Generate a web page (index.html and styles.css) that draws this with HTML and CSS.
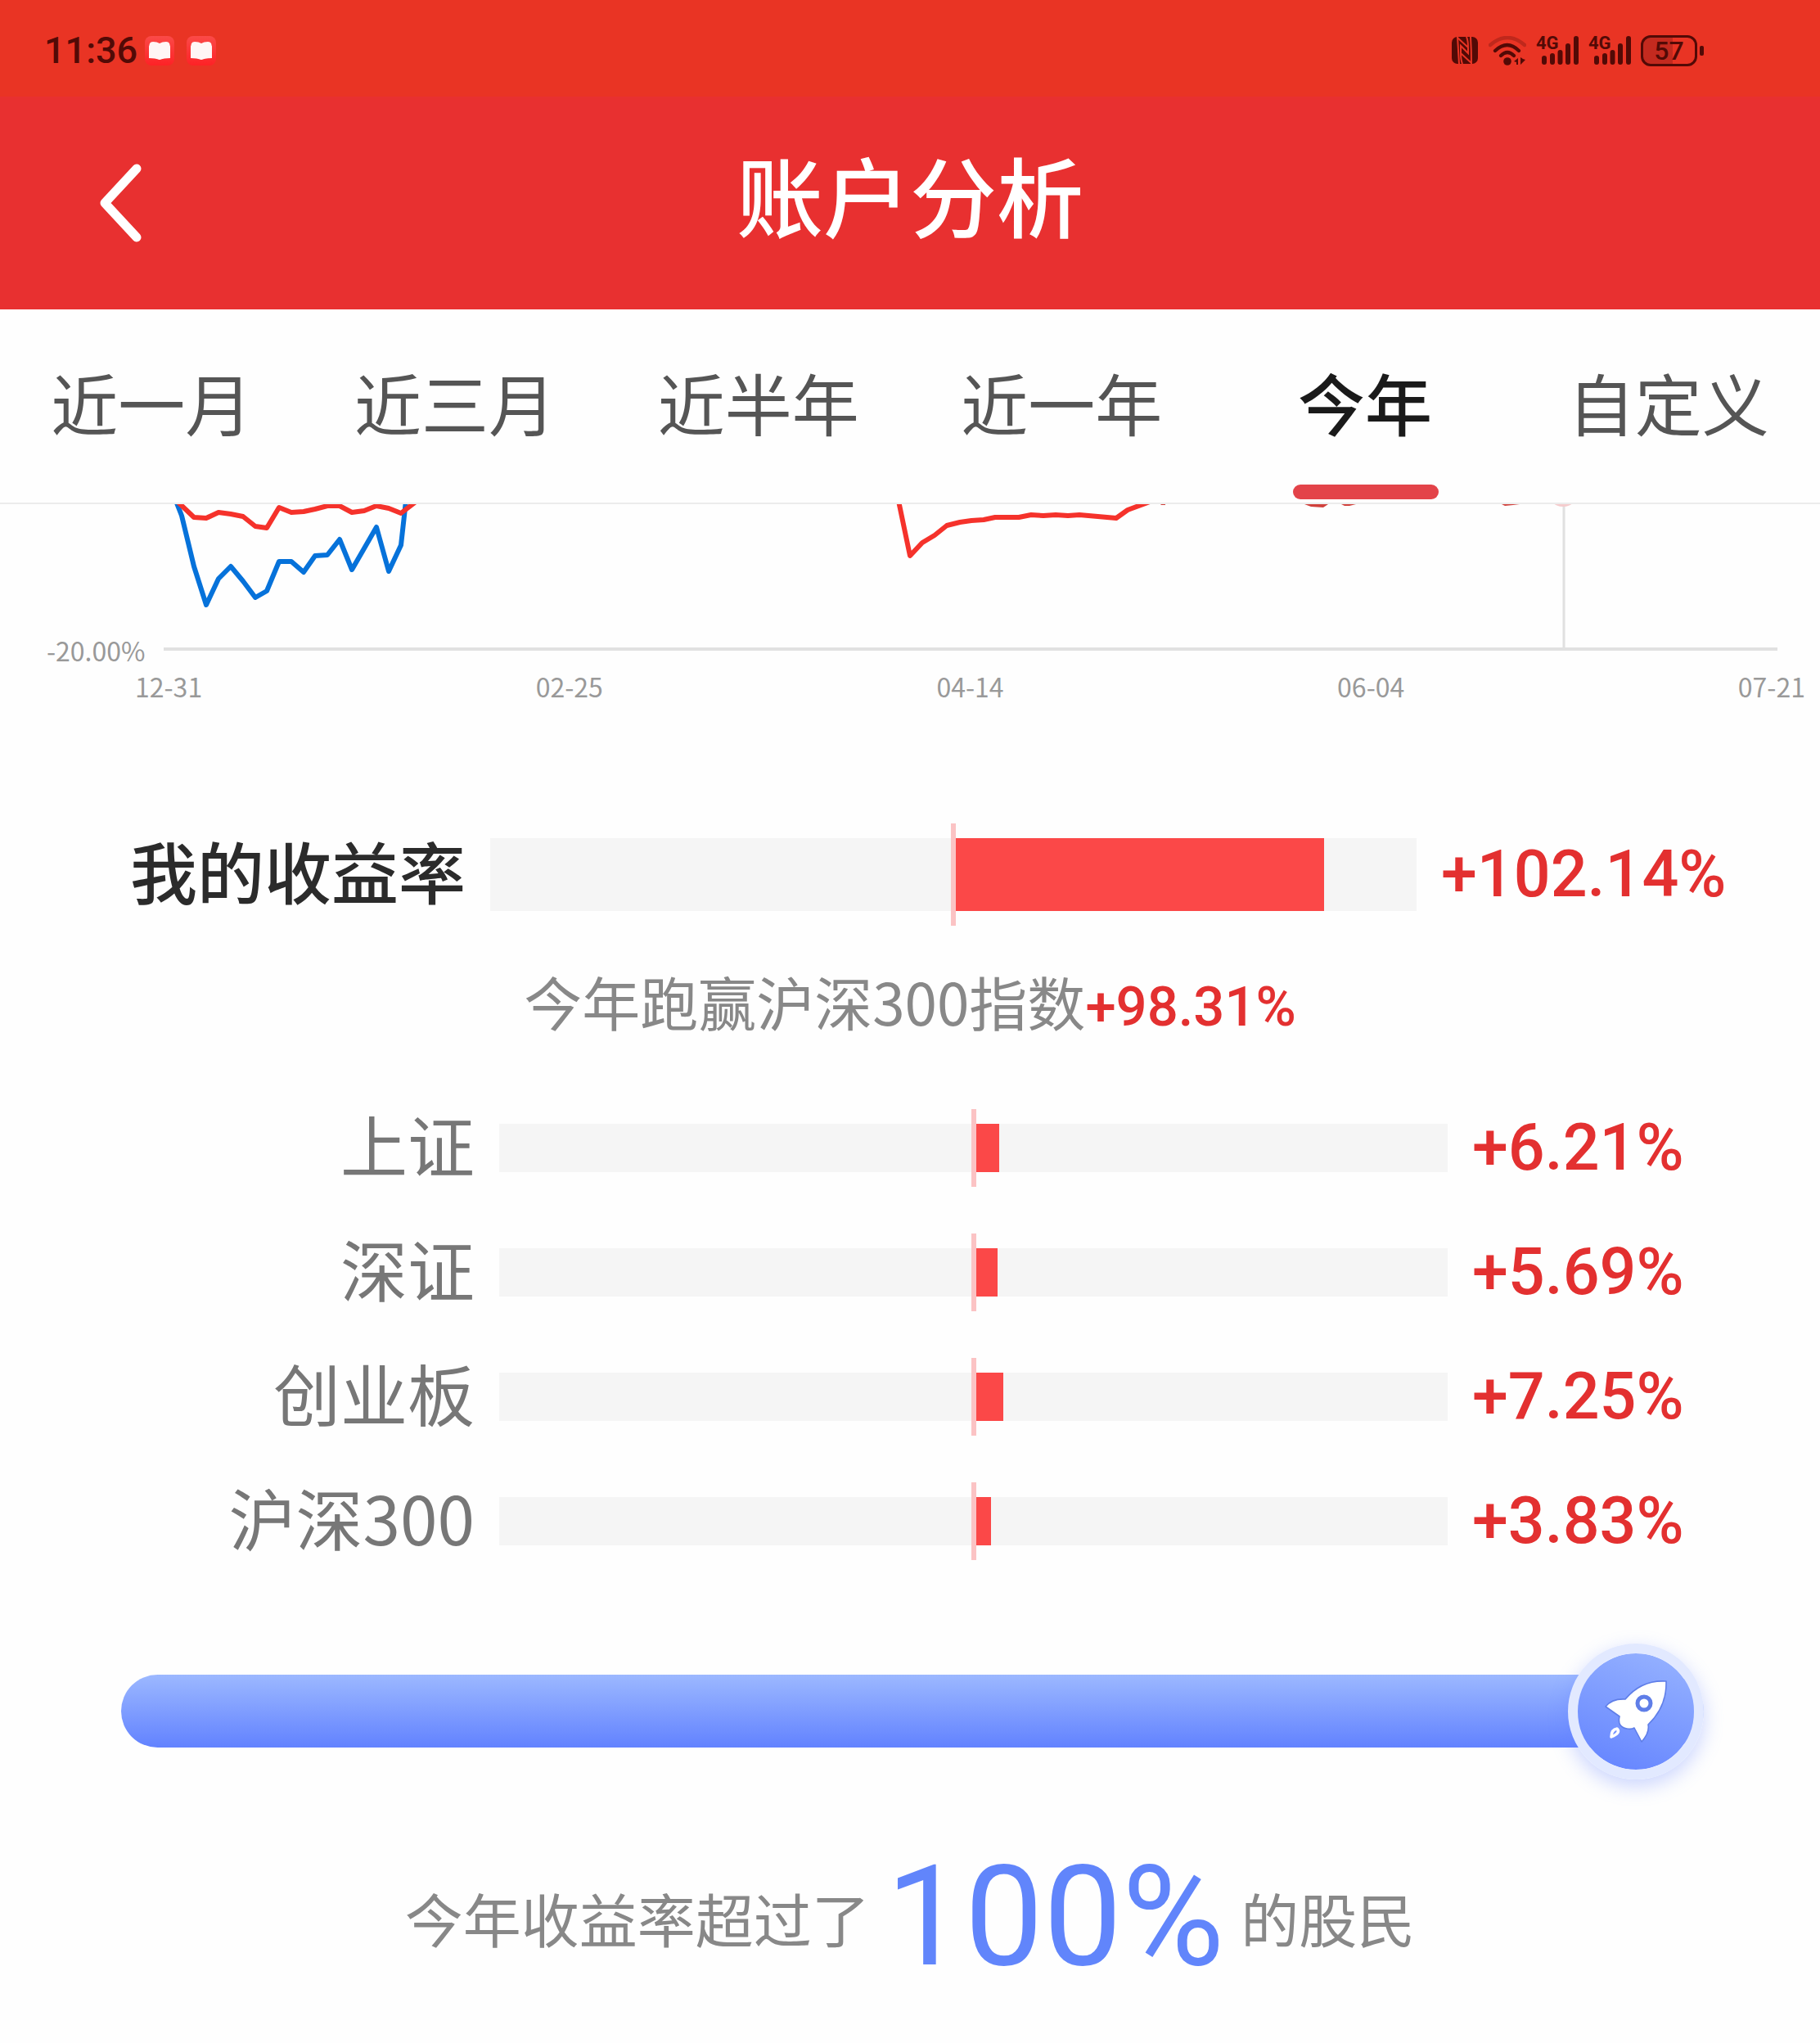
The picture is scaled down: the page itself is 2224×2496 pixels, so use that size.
FILE: index.html
```html
<!DOCTYPE html>
<html lang="zh-CN">
<head>
<meta charset="utf-8">
<meta name="viewport" content="width=device-width, initial-scale=1">
<title>账户分析</title>
<link rel="stylesheet" href="styles.css">
</head>
<body>
<div class="status">
  <div class="status-left">
    <span class="clock">11:36</span>
    <svg class="book" viewBox="0 0 36 36" aria-hidden="true"><defs><linearGradient id="bk" x1="0" y1="0" x2="0" y2="1"><stop offset="0" stop-color="#fb4a48"/><stop offset="1" stop-color="#fd2226"/></linearGradient></defs><rect width="36" height="36" rx="8" fill="url(#bk)"/><path d="M5 12v15q8-1 13 2 5-3 13-2V12z" fill="#ff9c9c"/><path d="M6 9q1-2 4-2 5 0 8 2 3-2 8-2 3 0 4 2l1 4v14q-8 0-13 2-5-2-13-2V13z" fill="#fff6f5"/></svg>
    <svg class="book" viewBox="0 0 36 36" aria-hidden="true"><rect width="36" height="36" rx="8" fill="url(#bk)"/><path d="M5 12v15q8-1 13 2 5-3 13-2V12z" fill="#ff9c9c"/><path d="M6 9q1-2 4-2 5 0 8 2 3-2 8-2 3 0 4 2l1 4v14q-8 0-13 2-5-2-13-2V13z" fill="#fff6f5"/></svg>
  </div>
  <div class="status-right">
    <svg class="nfc" viewBox="0 0 34 34" aria-hidden="true"><rect x="1" y="0" width="32" height="33" rx="7" fill="#520a06"/><g fill="none" stroke="#e93424" stroke-width="2"><path d="M8 0Q9 16 10 33"/><path d="M25 33Q25 16 24 0"/><path d="M8 1 21 13Q21 5 19 0"/><path d="M25 32 12 20Q12 28 14 33"/><path d="M12 20V11L21 20V13"/></g></svg>
    <svg class="wifi" viewBox="0 0 46 36" aria-hidden="true"><g fill="none" stroke="#520a06" stroke-width="4.4" stroke-linecap="round"><path d="M2 11Q23-7 44 11" opacity=".28"/><path d="M8 18Q23 4 37 18"/><path d="M15 24Q23 16 31 24"/></g><circle cx="23" cy="31" r="4.8" fill="#520a06"/><path d="M31 31l5-4v8h-2v-3zM39 26v9l6-6-3-1z" fill="#520a06"/></svg>
    <div class="signal"><svg viewBox="0 0 52 36" aria-hidden="true"><g stroke="#520a06" stroke-width="6" stroke-linecap="round"><path d="M10 27v5M20 24v8M29.500 20v12M39 12v20M49 3v29"/></g></svg><span>4G</span></div>
    <div class="signal"><svg viewBox="0 0 52 36" aria-hidden="true"><g stroke="#520a06" stroke-width="6" stroke-linecap="round"><path d="M10 27v5M20 24v8M29.500 20v12M39 12v20M49 3v29"/></g></svg><span>4G</span></div>
    <div class="battery">57</div>
  </div>
</div>

<header class="header">
  <button class="back" aria-label="返回"><svg viewBox="0 0 54 98" aria-hidden="true"><path d="M47 7 8 49 47 91" fill="none" stroke="#fff" stroke-width="11" stroke-linecap="round" stroke-linejoin="round"/></svg></button>
  <h1>账户分析</h1>
</header>

<nav class="tabs">
  <button>近一月</button>
  <button>近三月</button>
  <button>近半年</button>
  <button>近一年</button>
  <button class="active" aria-current="true">今年</button>
  <button>自定义</button>
</nav>

<main>
  <section class="chart">
    <svg class="plot" viewBox="0 616 2224 180" aria-hidden="true">
      <path d="M1911 616V792" stroke="#e0e0e0" stroke-width="3"/>
      <circle cx="1910" cy="599" r="20" fill="#f5cccd"/>
      <path d="M200 793H2172" stroke="#e1e1e1" stroke-width="4"/>
      <g fill="none" stroke-width="6" stroke-linejoin="round">
        <path stroke="#0672da" d="M215 612 222 630 237 692 252 739 267 707 282 692 297 710 312 730 326 722 341 686 356 686 371 699 385 679 400 678 415 659 430 696 460 644 475 698 490 666 496 612"/>
        <path stroke="#f5322b" d="M216 612 237 632 252 633 267 626 282 628 297 631 312 643 326 645 341 620 356 626 371 625 385 622 400 618 415 618 430 626 445 624 460 618 475 621 490 627 508 613"/>
        <path stroke="#f5322b" d="M1098 612 1112 679 1127 663 1142 654 1157 642 1173 638 1187 636 1202 635 1216 632 1245 632 1260 629 1275 630 1290 629 1305 630 1319 629 1364 633 1378 623 1405 613"/>
      </g>
      <path fill="#d0413c" d="M1594 616h29l-6 4-15-1zM1639 616h18l-8 2h-6zM1835 616h22l-8 1-10 1zM1417 615h7v2h-5z"/>
    </svg>
    <span class="y-label">-20.00%</span>
    <div class="x-labels"><span>12-31</span><span>02-25</span><span>04-14</span><span>06-04</span><span>07-21</span></div>
  </section>

  <section class="rates">
    <div class="rate mine">
      <span class="name">我的收益率</span>
      <div class="track"><i class="fill" style="width:450px"></i></div>
      <span class="value">+102.14%</span>
    </div>
    <p class="beat">今年跑赢沪深300指数<b>+98.31%</b></p>
    <div class="rate"><span class="name">上证</span><div class="track"><i class="fill" style="width:28px"></i></div><span class="value">+6.21%</span></div>
    <div class="rate"><span class="name">深证</span><div class="track"><i class="fill" style="width:26px"></i></div><span class="value">+5.69%</span></div>
    <div class="rate"><span class="name">创业板</span><div class="track"><i class="fill" style="width:33px"></i></div><span class="value">+7.25%</span></div>
    <div class="rate"><span class="name">沪深300</span><div class="track"><i class="fill" style="width:18px"></i></div><span class="value">+3.83%</span></div>
  </section>

  <section class="rank">
    <div class="progress">
      <div class="knob"><svg viewBox="0 0 78 78" aria-hidden="true"><g stroke="#5f7ee8" stroke-width="1.600" stroke-linejoin="round"><path fill="#fff" d="M76 2Q46 0 26 24 10 23 2 33L19 45Q16 58 28 60 34 61 37 59L46 76Q56 65 54 55 77 33 76 2Z"/><circle cx="49" cy="29" r="8" fill="#fff" stroke-width="5"/></g><path d="M9 70Q9 61 16 60 21 65 9 70Z" fill="none" stroke="#fff" stroke-width="3.500" stroke-linejoin="round"/></svg></div>
    </div>
    <p class="summary"><span>今年收益率超过了</span><strong>100%</strong><span>的股民</span></p>
  </section>
</main>
</body>
</html>
```
FILE: styles.css
```css
* { box-sizing: border-box; }
body {
  margin: 0;
  background: #fefefe;
  color: #777;
  font-family: "Noto Sans CJK SC", sans-serif;
}
button { border: 0; padding: 0; background: none; font: inherit; color: inherit; }
h1, p { margin: 0; font-weight: 400; }
svg { display: block; }

.status {
  display: flex;
  justify-content: space-between;
  align-items: center;
  height: 118px;
  padding: 6px 142px 0 54px;
  background: #e93424;
  color: #520a06;
}
.status-left, .status-right { display: flex; align-items: center; }
.clock { width: 123px; font: 500 45px/60px Roboto, sans-serif; }
.book { width: 36px; height: 36px; margin-right: 15px; }
.nfc { width: 34px; height: 34px; margin-right: 12px; }
.wifi { width: 46px; height: 36px; margin-right: 12px; }
.signal { position: relative; width: 52px; height: 36px; margin-right: 12px; }
.signal span { position: absolute; left: 0; top: 0; font: 700 22px/18px Roboto, sans-serif; }
.battery {
  position: relative;
  width: 69px;
  height: 38px;
  margin-right: 8px;
  border: 3px solid #520a06;
  border-radius: 12px;
  background: linear-gradient(90deg, #c32a1f 57%, transparent 57%);
  font: 500 32px/32px Roboto, sans-serif;
  text-align: center;
}
.battery::after {
  content: "";
  position: absolute;
  right: -11px;
  top: 10px;
  width: 5px;
  height: 12px;
  border-radius: 2px;
  background: #520a06;
}

.header {
  display: grid;
  grid-template-columns: 1fr auto 1fr;
  align-items: center;
  height: 260px;
  padding: 0 120px;
  background: #e83030;
  color: #fff;
}
.back svg { width: 54px; height: 98px; }
.header h1 { padding-bottom: 24px; font-size: 106px; line-height: 140px; font-weight: 500; }

.tabs {
  display: grid;
  grid-template-columns: repeat(6, 1fr);
  height: 238px;
  border-bottom: 2px solid #ececec;
  color: #555;
  font-size: 82px;
  line-height: 120px;
}
.tabs button { position: relative; padding-bottom: 10px; }
.tabs .active { color: #1a1a1a; font-weight: 500; }
.tabs .active::after {
  content: "";
  position: absolute;
  left: 50%;
  bottom: 4px;
  width: 178px;
  height: 18px;
  margin-left: -88px;
  border-radius: 9px;
  background: #e34349;
}

.chart { position: relative; color: #999; font-size: 32px; line-height: 40px; }
.plot { width: 100%; }
.y-label { position: absolute; left: 57px; bottom: 44px; }
.x-labels { display: flex; justify-content: space-between; padding: 22px 18px 0 165px; }

.rates { padding-top: 134px; }
.rate {
  display: grid;
  grid-template-columns: 580px 1fr 425px;
  gap: 30px;
  align-items: center;
  height: 152px;
  font-size: 82px;
  line-height: 96px;
}
.rate.mine { grid-template-columns: 569px 1fr 463px; color: #2b2b2b; font-weight: 500; }
.name { padding-bottom: 10px; text-align: right; white-space: nowrap; }
.value { color: #e33030; font: 500 79px/96px Roboto, sans-serif; }
.track {
  position: relative;
  height: 59px;
  background: #f5f5f5;
}
.mine .track { height: 89px; }
.track::before {
  content: "";
  position: absolute;
  left: calc(50% - 3px);
  top: -18px;
  bottom: -18px;
  width: 6px;
  background: #fbc3c4;
}
.fill {
  position: absolute;
  left: calc(50% + 3px);
  top: 0;
  bottom: 0;
  background: #fb4848;
}
.beat {
  height: 182px;
  padding-top: 26px;
  text-align: center;
  color: #888;
  font-size: 71px;
  line-height: 104px;
}
.beat b { color: #e33030; font: 500 67px/104px Roboto, sans-serif; }

.progress {
  display: flex;
  justify-content: flex-end;
  align-items: center;
  height: 89px;
  margin: 112px 142px 0 148px;
  border-radius: 45px;
  background: linear-gradient(#9cb8ff, #6282ff);
}
.knob {
  display: grid;
  place-items: center;
  width: 166px;
  height: 166px;
  border: 12px solid #e2e9ff;
  border-radius: 50%;
  background: linear-gradient(200deg, #98b4ff, #6282ff);
  background-clip: padding-box;
  box-shadow: 0 8px 24px #6282ff55;
}
.knob svg { width: 78px; height: 78px; }
.summary {
  display: flex;
  justify-content: center;
  align-items: center;
  margin-top: 87px;
  color: #888;
  font-size: 71px;
  line-height: 240px;
}
.summary strong { margin: 0 20px; color: #6185fb; font: 400 171px/240px Roboto, sans-serif; }
```
